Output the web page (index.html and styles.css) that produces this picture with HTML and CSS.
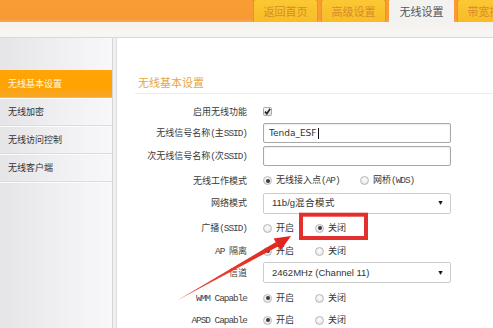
FILE: index.html
```html
<!DOCTYPE html>
<html lang="zh-CN">
<head>
<meta charset="utf-8">
<title>无线基本设置</title>
<link rel="stylesheet" href="styles.css">
</head>
<body>
<div class="page">
  <header class="top">
    <nav class="tabs">
      <a class="tab">返回首页</a>
      <a class="tab">高级设置</a>
      <a class="tab active">无线设置</a>
      <a class="tab">带宽控制</a>
    </nav>
  </header>
  <div class="band"></div>
  <div class="body">
    <aside class="side">
      <ul class="menu">
        <li class="item active">无线基本设置</li>
        <li class="item">无线加密</li>
        <li class="item">无线访问控制</li>
        <li class="item">无线客户端</li>
      </ul>
    </aside>
    <main class="main">
      <h2 class="title">无线基本设置</h2>
      <div class="form">
        <div class="lbl"><span>启用无线功能</span></div>
        <div class="val">
          <svg class="check" width="9" height="9" viewBox="0 0 9 9"><defs><linearGradient id="cg" x1="0" y1="0" x2="0" y2="1"><stop offset="0" stop-color="#ffffff"/><stop offset="1" stop-color="#d8d8d8"/></linearGradient></defs><rect x="0.5" y="0.5" width="8" height="8" rx="1" fill="url(#cg)" stroke="#a8a8a8"/><path d="M2 4.6 L3.8 6.6 L7.2 1.8" fill="none" stroke="#222" stroke-width="1.6"/></svg>
        </div>

        <div class="lbl"><span>无线信号名称<span class="en">(</span>主<span class="en">SSID)</span></span></div>
        <div class="val"><div class="input">Tenda_ESF<span class="caret"></span></div></div>

        <div class="lbl"><span>次无线信号名称<span class="en">(</span>次<span class="en">SSID)</span></span></div>
        <div class="val"><div class="input"></div></div>

        <div class="lbl"><span>无线工作模式</span></div>
        <div class="val">
          <span class="opt wide"><span class="radio on"></span><span>无线接入点<span class="en">(AP)</span></span></span>
          <span class="opt"><span class="radio"></span><span>网桥<span class="en">(WDS)</span></span></span>
        </div>

        <div class="lbl"><span>网络模式</span></div>
        <div class="val"><div class="select"><span>11b/g混合模式</span><span class="arrow">▼</span></div></div>

        <div class="lbl"><span>广播<span class="en">(SSID)</span></span></div>
        <div class="val">
          <span class="opt"><span class="radio"></span><span>开启</span></span>
          <span class="opt"><span class="radio on"></span><span>关闭</span></span>
        </div>

        <div class="lbl"><span><span class="en">AP </span>隔离</span></div>
        <div class="val">
          <span class="opt"><span class="radio on"></span><span>开启</span></span>
          <span class="opt"><span class="radio"></span><span>关闭</span></span>
        </div>

        <div class="lbl"><span>信道</span></div>
        <div class="val"><div class="select"><span>2462MHz (Channel 11)</span><span class="arrow">▼</span></div></div>

        <div class="lbl"><span><span class="en">WMM Capable</span></span></div>
        <div class="val">
          <span class="opt"><span class="radio on"></span><span>开启</span></span>
          <span class="opt"><span class="radio"></span><span>关闭</span></span>
        </div>

        <div class="lbl"><span><span class="en">APSD Capable</span></span></div>
        <div class="val">
          <span class="opt"><span class="radio on"></span><span>开启</span></span>
          <span class="opt"><span class="radio"></span><span>关闭</span></span>
        </div>
      </div>
    </main>
  </div>
  <svg class="annot" width="493" height="328" viewBox="0 0 493 328">
    <defs>
      <linearGradient id="ag" x1="0" y1="1" x2="1" y2="0">
        <stop offset="0" stop-color="#ea4a3c"/>
        <stop offset="1" stop-color="#e2261f"/>
      </linearGradient>
    </defs>
    <rect x="301" y="214.7" width="65" height="23.3" fill="none" stroke="#e3302f" stroke-width="4"/>
    <polygon points="177,300.5 276,242 278.4,246.3" fill="url(#ag)"/>
    <polygon points="291,236 273.6,238.6 280.6,250.6" fill="#e2261f"/>
  </svg>
</div>
</body>
</html>
```

FILE: styles.css
```css
* { box-sizing: border-box; }
html, body { margin: 0; padding: 0; }
body {
  width: 493px;
  height: 328px;
  overflow: hidden;
  background: #ffffff;
  font-family: "Noto Sans CJK SC", "Noto Sans", sans-serif;
  color: #333;
}
.page {
  position: relative;
  width: 493px;
  height: 328px;
  display: flex;
  flex-direction: column;
  overflow: hidden;
}

/* top orange bar with tabs */
.top {
  height: 22px;
  background: linear-gradient(#f99d33, #f79a34 85%, #f2a95a);
  flex: none;
  overflow: hidden;
}
.tabs {
  display: flex;
  gap: 3px;
  margin-left: 253px;
  height: 22px;
}
.tab {
  flex: none;
  width: 65px;
  height: 23px;
  margin-top: -1px;
  border: 1px solid #e8962a;
  border-bottom: none;
  border-radius: 3px 3px 0 0;
  background: linear-gradient(#fbc833, #f7bd27);
  color: #d98a2c;
  font-size: 11px;
  line-height: 23px;
  text-align: center;
  white-space: nowrap;
  overflow: hidden;
}
.tab.active {
  background: #f3f2f1;
  border-color: #f3f2f1;
  color: #555;
}

.band {
  height: 16px;
  flex: none;
  background: linear-gradient(#f6f2ee, #f8f6f4);
  border-bottom: 1px solid #d9d9d9;
}

.body {
  flex: 1;
  display: flex;
  min-height: 0;
  background: #f0f0f0;
}

/* sidebar */
.side {
  width: 113px;
  flex: none;
  background: linear-gradient(90deg, #e5e4e7, #efeef1 50%, #f8f7f9);
  border-right: 1px solid #d6d6d6;
  padding-top: 32px;
}
.menu {
  list-style: none;
  margin: 0;
  padding: 0;
}
.item {
  height: 28px;
  line-height: 27px;
  padding-left: 8px;
  font-size: 9px;
  color: #333;
  border-bottom: 1px solid #dcdcdc;
  box-shadow: 0 1px 0 #fbfbfb;
}
.item.active {
  background: linear-gradient(#ffa40a, #ffa300 60%, #f6a629);
  color: #fff6e0;
  border-bottom-color: #f0b860;
}

/* main */
.main {
  flex: 1;
  margin-left: 3px;
  background: #ffffff;
  border-left: 1px solid #dedede;
  min-width: 0;
}
.title {
  margin: 34px 0 0 18px;
  height: 22px;
  padding-left: 3px;
  font-size: 11px;
  line-height: 21px;
  font-weight: normal;
  color: #e9a63f;
  border-bottom: 1px solid #ececec;
}

.form {
  margin: 7px 0 0 18px;
  display: grid;
  grid-template-columns: 112px 188px;
  grid-template-rows: 21px 22px 24px 25px 20px 30px 16px 27px 24px 20px;
  column-gap: 16px;
}
.lbl {
  display: flex;
  align-items: center;
  justify-content: flex-end;
  font-size: 9px;
  line-height: 12px;
  color: #3a3a3a;
  white-space: nowrap;
}
.en {
  font-family: "Liberation Mono", "DejaVu Sans Mono", monospace;
  font-size: 9.4px;
  letter-spacing: -1px;
  white-space: pre;
  color: #444;
}
.val {
  display: flex;
  align-items: center;
  font-size: 9px;
  line-height: 12px;
  color: #333;
  white-space: nowrap;
}
.check { display: block; }

.input {
  width: 188px;
  height: 20px;
  border: 1px solid #a8a8a8;
  border-radius: 2px;
  box-shadow: inset 0 1px 2px rgba(0, 0, 0, 0.08);
  padding-left: 5px;
  display: flex;
  align-items: center;
  font-family: "DejaVu Sans", sans-serif;
  font-size: 9px;
  color: #333;
  background: #fff;
}
.caret {
  width: 1px;
  height: 11px;
  background: #111;
  margin-left: 1px;
}
.select {
  width: 188px;
  height: 21px;
  border: 1px solid #cdcdcd;
  border-radius: 2px;
  padding: 0 6px 0 8px;
  display: flex;
  align-items: center;
  justify-content: space-between;
  font-family: "Liberation Sans", Arial, sans-serif;
  font-size: 9.5px;
  color: #333;
  background: #fff;
}
.arrow {
  font-size: 7px;
  color: #111;
}

.opt {
  display: inline-flex;
  align-items: center;
  width: 52px;
  flex: none;
}
.opt.wide { width: 97px; }
.radio {
  position: relative;
  width: 9px;
  height: 9px;
  margin-right: 4px;
  border-radius: 50%;
  border: 1px solid #b9b9b9;
  background: radial-gradient(circle at 50% 40%, #ffffff, #dcdcdc);
  flex: none;
}
.radio.on::after {
  content: "";
  position: absolute;
  left: 1.5px;
  top: 1.5px;
  width: 4px;
  height: 4px;
  border-radius: 50%;
  background: #3a3a3a;
}

/* annotation layer (red box + arrow) */
.annot {
  position: absolute;
  left: 0;
  top: 0;
  pointer-events: none;
}
```
